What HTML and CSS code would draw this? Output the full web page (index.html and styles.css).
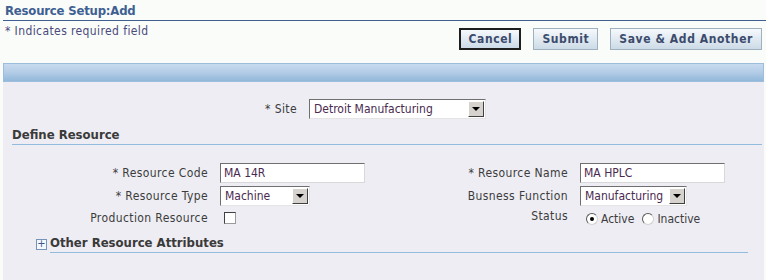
FILE: index.html
```html
<!DOCTYPE html>
<html lang="en">
<head>
  <meta charset="UTF-8">
  <title>Resource Setup:Add</title>
  <link rel="stylesheet" href="styles.css">
</head>
<body>

<div class="page-head">
  <h1>Resource Setup:Add</h1>
  <div class="head-row">
    <span class="req-note">* Indicates required field</span>
    <div class="actions">
      <button class="btn btn-default">Cancel</button>
      <button class="btn">Submit</button>
      <button class="btn">Save &amp; Add Another</button>
    </div>
  </div>
</div>

<div class="bar"></div>

<div class="content">
  <div class="site-row">
    <label class="lbl">* Site</label>
    <div class="select site-select"><span>Detroit Manufacturing</span><span class="arrow"></span></div>
  </div>

  <h2 class="section">Define Resource</h2>

  <div class="form-grid">
    <label class="lbl">* Resource Code</label>
    <div><input class="txt" type="text" value="MA 14R"></div>
    <label class="lbl">* Resource Name</label>
    <div><input class="txt" type="text" value="MA HPLC"></div>

    <label class="lbl">* Resource Type</label>
    <div class="select type-select"><span>Machine</span><span class="arrow"></span></div>
    <label class="lbl">Busness Function</label>
    <div class="select func-select"><span>Manufacturing</span><span class="arrow"></span></div>

    <label class="lbl">Production Resource</label>
    <div><span class="check"></span></div>
    <label class="lbl lbl-top">Status</label>
    <div class="radios">
      <span class="radio on"></span><span class="opt">Active</span>
      <span class="radio"></span><span class="opt">Inactive</span>
    </div>
  </div>

  <div class="sub-section">
    <span class="plus">+</span>
    <h3>Other Resource Attributes</h3>
  </div>
</div>

</body>
</html>
```

FILE: styles.css
```css
body {
  margin: 0;
  background: #f9fcf9;
  font-family: "DejaVu Sans Condensed", "DejaVu Sans", Tahoma, sans-serif;
  font-size: 12px;
  color: #3c3c3c;
  height: 280px;
  display: flex;
  flex-direction: column;
  overflow: hidden;
}
.page-head {
  padding: 0 0 0 3px;
}
h1 {
  margin: 0;
  padding: 3px 0 1px 2px;
  font-size: 13px;
  font-weight: bold;
  color: #3f5f92;
  border-bottom: 1px solid #3f5f92;
  line-height: 16px;
  letter-spacing: -0.2px;
}
.head-row {
  display: flex;
  justify-content: space-between;
  padding: 3px 4px 0 2px;
  height: 39px;
}
.req-note {
  color: #4b4a7c;
  line-height: 14px;
  letter-spacing: 0.4px;
}
.actions {
  display: flex;
  gap: 12px;
  padding-top: 4px;
  align-items: flex-start;
}
.btn {
  font-family: inherit;
  font-size: 12px;
  font-weight: bold;
  letter-spacing: 0.6px;
  color: #3c4b6c;
  height: 22px;
  padding: 0 8px;
  background: linear-gradient(#f6f9fc, #ccdbe7);
  border: 1px solid #9fb0bf;
  border-radius: 0;
}
.btn-default {
  border: 2px solid #1e1e1e;
  padding: 0 7px;
}
.bar {
  margin: 0 2px 0 3px;
  height: 17px;
  border: 1px solid #9dbddc;
  background: linear-gradient(#c8dbef, #b3cce6 50%, #92b8da);
}
.content {
  flex: 1;
  margin: 0 2px 0 3px;
  padding: 0 0 0 9px;
  background: #ededf3;
}
.site-row {
  display: flex;
  align-items: center;
  padding: 17px 0 0 0;
  height: 20px;
}
.site-row .lbl {
  width: 285px;
  margin-right: 12px;
}
.lbl {
  text-align: right;
  color: #3c3c3c;
  letter-spacing: 0.4px;
  white-space: nowrap;
}
.select {
  display: flex;
  align-items: center;
  height: 20px;
  box-sizing: border-box;
  background: #fff;
  border: 1px solid;
  border-color: #6f6f6f #e4e4e4 #e4e4e4 #6f6f6f;
  color: #4a2a50;
  padding-left: 4px;
}
.select span:first-child {
  flex: 1;
  white-space: nowrap;
}
.arrow {
  width: 16px;
  height: 16px;
  box-sizing: border-box;
  margin-right: 1px;
  background: #d6d3ce;
  border: 1px solid;
  border-color: #fff #404040 #404040 #fff;
  position: relative;
}
.arrow::after {
  content: "";
  position: absolute;
  left: 3px;
  top: 5px;
  border-left: 4px solid transparent;
  border-right: 4px solid transparent;
  border-top: 4px solid #000;
}
.site-select { width: 177px; }
.type-select { width: 90px; }
.func-select { width: 107px; }
.section {
  margin: 8px 2px 0 0;
  font-size: 13px;
  font-weight: bold;
  color: #3a3a3a;
  line-height: 16px;
  border-bottom: 1px solid #93bbde;
  padding-bottom: 1px;
}
.form-grid {
  display: grid;
  grid-template-columns: 196px 160px 176px 1fr;
  grid-template-rows: 23px 24px 20px;
  column-gap: 12px;
  align-items: center;
  margin-top: 16px;
}
.txt {
  display: block;
  width: 145px;
  height: 20px;
  box-sizing: border-box;
  margin: 0;
  padding: 0 3px;
  font-family: inherit;
  font-size: 12px;
  color: #4a2a50;
  background: #fff;
  border: 1px solid;
  border-color: #6f6f6f #d8d8d8 #d8d8d8 #6f6f6f;
}
.check {
  display: block;
  margin-left: 4px;
  width: 12px;
  height: 12px;
  box-sizing: border-box;
  background: #fff;
  border: 1px solid;
  border-color: #404040 #9a9a9a #9a9a9a #404040;
}
.lbl-top {
  align-self: start;
  padding-top: 1px;
}
.radios {
  display: flex;
  align-items: center;
  padding-top: 2px;
  color: #3c3c3c;
}
.radio {
  width: 12px;
  height: 12px;
  box-sizing: border-box;
  border-radius: 50%;
  background: #fff;
  border: 1px solid;
  border-color: #5a5a5a #d0d0d0 #d0d0d0 #5a5a5a;
  margin: 0 3px 0 6px;
  position: relative;
}
.radio.on::after {
  content: "";
  position: absolute;
  left: 3px;
  top: 3px;
  width: 4px;
  height: 4px;
  border-radius: 50%;
  background: #000;
}
.opt {
  margin-right: 2px;
}
.sub-section {
  display: flex;
  align-items: center;
  margin: 7px 16px 0 24px;
}
.plus {
  width: 11px;
  height: 11px;
  box-sizing: border-box;
  border: 1px solid #7594b8;
  background: #f4f8fc;
  color: #3a5a8a;
  font-size: 11px;
  line-height: 8px;
  text-align: center;
  margin-right: 3px;
}
.sub-section h3 {
  flex: 1;
  margin: 0;
  font-size: 13px;
  font-weight: bold;
  color: #3a3a3a;
  line-height: 16px;
  border-bottom: 1px solid #93bbde;
  padding-bottom: 1px;
}
```
